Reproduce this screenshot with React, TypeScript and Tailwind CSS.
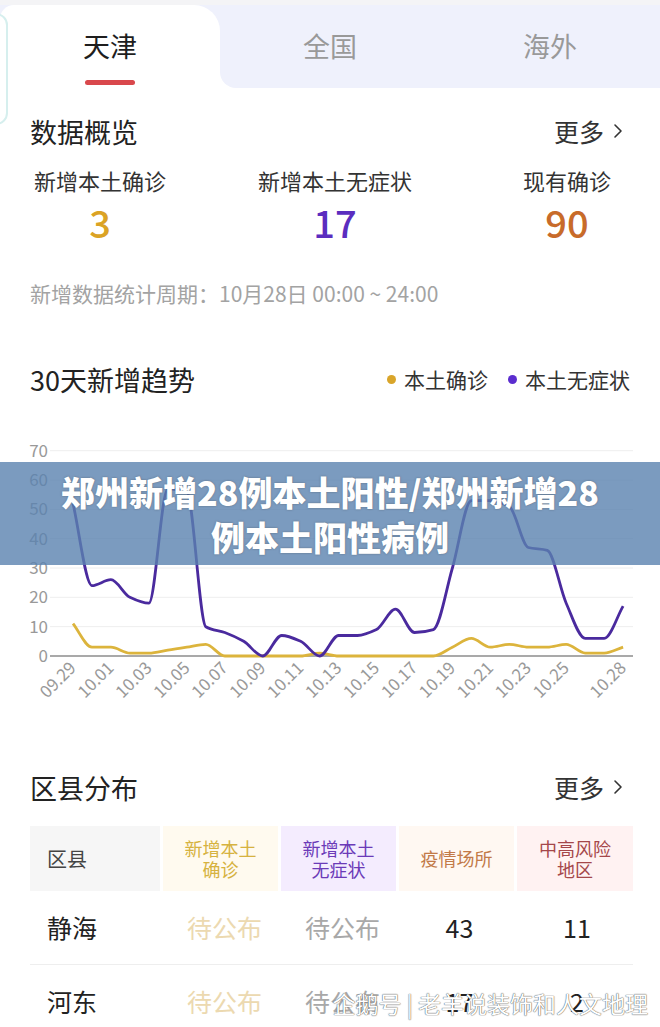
import React from 'react';
import { ChevronRight } from 'lucide-react';

const purple = [52, 24, 26, 20, 18, 57, 56, 10, 8, 5, 0, 7, 5, 0, 7, 7, 9, 16, 8, 9, 30, 53, 53, 51, 37, 36, 18, 6, 6, 17];
const gold = [11, 3, 3, 1, 1, 2, 3, 4, 0, 0, 0, 0, 0, 1, 0, 0, 0, 0, 0, 0, 3, 6, 3, 4, 3, 3, 4, 1, 1, 3];

const X0 = 73;
const STEP = 18.97;
const BASE = 226;
const UNIT = 2.933;

const px = (i: number) => X0 + STEP * i;
const py = (v: number) => BASE - v * UNIT;

// monotone cubic, so the lines don't dip under zero
function smoothPath(values: number[]) {
  const pts = values.map((v, i) => [px(i), py(v)]);
  const n = pts.length;
  const d: number[] = [];
  for (let i = 0; i < n - 1; i++) d.push((pts[i + 1][1] - pts[i][1]) / (pts[i + 1][0] - pts[i][0]));
  const t: number[] = new Array(n).fill(0);
  t[0] = d[0];
  t[n - 1] = d[n - 2];
  for (let i = 1; i < n - 1; i++) {
    const a = d[i - 1];
    const b = d[i];
    t[i] = a * b <= 0 ? 0 : (2 * a * b) / (a + b);
  }
  let path = `M${pts[0][0].toFixed(1)},${pts[0][1].toFixed(1)}`;
  for (let i = 0; i < n - 1; i++) {
    const h = pts[i + 1][0] - pts[i][0];
    const c1x = pts[i][0] + h / 3;
    const c1y = pts[i][1] + (t[i] * h) / 3;
    const c2x = pts[i + 1][0] - h / 3;
    const c2y = pts[i + 1][1] - (t[i + 1] * h) / 3;
    path += ` C${c1x.toFixed(1)},${c1y.toFixed(1)} ${c2x.toFixed(1)},${c2y.toFixed(1)} ${pts[i + 1][0].toFixed(1)},${pts[i + 1][1].toFixed(1)}`;
  }
  return path;
}

const xLabels: [number, string][] = [
  [0, '09.29'], [2, '10.01'], [4, '10.03'], [6, '10.05'], [8, '10.07'], [10, '10.09'], [12, '10.11'],
  [14, '10.13'], [16, '10.15'], [18, '10.17'], [20, '10.19'], [22, '10.21'], [24, '10.23'], [26, '10.25'], [29, '10.28'],
];

const SectionHead: React.FC<{ title: string; more?: boolean; legend?: boolean }> = ({ title, more, legend }) => (
  <div className="flex h-[48px] items-center justify-between">
    <span className="text-[27px] leading-none text-[#222]">{title}</span>
    {more && (
      <span className="flex items-center text-[25px] leading-none text-[#333]">
        更多
        <ChevronRight className="ml-[2px] h-[24px] w-[24px]" strokeWidth={1.6} />
      </span>
    )}
    {legend && (
      <span className="flex items-center text-[21px] leading-none text-[#333]">
        <span className="mr-[8px] h-[9px] w-[9px] rounded-full bg-[#d9a52a]" />
        本土确诊
        <span className="ml-[20px] mr-[8px] h-[9px] w-[9px] rounded-full bg-[#5b2dcf]" />
        本土无症状
      </span>
    )}
  </div>
);

const Chart: React.FC = () => (
  <div className="relative mt-[27px] h-[290px]">
    <svg width="660" height="290" className="block">
      {[70, 60, 50, 40, 30, 20, 10].map((v) => (
        <line key={v} x1="50" x2="633" y1={py(v)} y2={py(v)} stroke="#eeeeee" strokeWidth="1" />
      ))}
      <line x1="50" x2="633" y1={BASE} y2={BASE} stroke="#8c8c8c" strokeWidth="1.5" />
      {[70, 60, 50, 40, 30, 20, 10, 0].map((v) => (
        <text key={v} x="48" y={py(v)} dy="0.35em" textAnchor="end" fontSize="17" fill="#999">
          {v}
        </text>
      ))}
      <path d={smoothPath(gold)} fill="none" stroke="#dcb43c" strokeWidth="2.8" strokeLinejoin="round" />
      <path d={smoothPath(purple)} fill="none" stroke="#4a2a9e" strokeWidth="2.8" strokeLinejoin="round" />
      {xLabels.map(([i, l]) => (
        <text
          key={l}
          x={px(i) + 4}
          y={BASE + 13}
          textAnchor="end"
          fontSize="17"
          fill="#999"
          transform={`rotate(-45 ${px(i) + 4} ${BASE + 13})`}
        >
          {l}
        </text>
      ))}
    </svg>
    <div className="absolute left-0 right-0 top-[32px] flex h-[103px] items-center justify-center bg-[#5a82af]/80 text-center text-[34px] font-black leading-[45px] text-white [text-shadow:0_0_2px_rgba(60,60,60,0.5)]">
      <span>
        郑州新增28例本土阳性/郑州新增28
        <br />
        例本土阳性病例
      </span>
    </div>
  </div>
);

const headCells = [
  { t: ['区县'], bg: 'bg-[#f6f6f6]', c: 'text-[#444] text-[20px] justify-start pl-[17px]' },
  { t: ['新增本土', '确诊'], bg: 'bg-[#fffaef]', c: 'text-[#d6b240] text-[18px] justify-center' },
  { t: ['新增本土', '无症状'], bg: 'bg-[#f4ecfe]', c: 'text-[#6b3ab8] text-[18px] justify-center' },
  { t: ['疫情场所'], bg: 'bg-[#fff8f2]', c: 'text-[#c27a48] text-[18px] justify-center' },
  { t: ['中高风险', '地区'], bg: 'bg-[#fff2f2]', c: 'text-[#a5474a] text-[18px] justify-center' },
];

const rows = [
  ['静海', '待公布', '待公布', '43', '11'],
  ['河东', '待公布', '待公布', '17', '2'],
];

const App: React.FC = () => {
  return (
    <div className="relative h-[1027px] w-[660px] overflow-hidden bg-white font-['Noto_Sans_CJK_SC','Noto_Sans',sans-serif]">
      {/* tabs */}
      <div className="bg-[#f4f4f6] pt-[5px]">
        <div className="flex h-[83px] bg-[#eff1fc]">
          <div className="relative flex w-[220px] flex-col items-center rounded-tl-[14px] rounded-tr-[26px] bg-white">
            <span className="mt-[23px] text-[27px] leading-[36px] text-[#1e1e1e]">天津</span>
            <span className="mt-[16px] h-[5px] w-[50px] rounded-full bg-[#d9484c]" />
            <div className="absolute bottom-0 right-[-16px] h-[16px] w-[16px] bg-white">
              <div className="h-full w-full rounded-bl-[16px] bg-[#eff1fc]" />
            </div>
          </div>
          <div className="flex w-[220px] justify-center">
            <span className="mt-[23px] text-[27px] leading-[36px] text-[#999]">全国</span>
          </div>
          <div className="flex w-[220px] justify-center">
            <span className="mt-[23px] text-[27px] leading-[36px] text-[#999]">海外</span>
          </div>
        </div>
      </div>
      <div className="absolute left-[-30px] top-[13px] h-[112px] w-[38px] rounded-[12px] border-2 border-[#d6efee]" />

      <div className="px-[30px]">
        <div className="mt-[19px]">
          <SectionHead title="数据概览" more />
        </div>
        <div className="-mx-[30px] mt-[10px] flex">
          {[
            ['新增本土确诊', '3', 'text-[#dba325]', 'ml-[20px]'],
            ['新增本土无症状', '17', 'text-[#5b2dbf]', 'ml-[75px]'],
            ['现有确诊', '90', 'text-[#c86b2a]', 'ml-[72px]'],
          ].map(([l, n, c, m]) => (
            <div key={l} className={`flex w-[160px] flex-col items-center ${m}`}>
              <span className="h-[30px] text-[22px] leading-[30px] text-[#333]">{l}</span>
              <span className={`mt-[5px] h-[44px] text-[38px] font-medium leading-[44px] ${c}`}>{n}</span>
            </div>
          ))}
        </div>
        <div className="mt-[35px] h-[28px] text-[21px] leading-[28px] text-[#a3a3a3]">
          新增数据统计周期：10月28日 00:00 ~ 24:00
        </div>
        <div className="mt-[48px]">
          <SectionHead title="30天新增趋势" legend />
        </div>
      </div>

      <Chart />

      <div className="px-[27px]">
        <div className="mt-[43px] px-[3px]">
          <SectionHead title="区县分布" more />
        </div>
        <div className="mt-[15px] grid grid-cols-[130px_115px_115px_115px_116px] gap-x-[3px] pl-[3px]">
          {headCells.map((h) => (
            <div key={h.t.join('')} className={`flex h-[65px] items-center ${h.bg} ${h.c}`}>
              <span className="text-center leading-[21px]">
                {h.t.map((s, i) => (
                  <React.Fragment key={s}>
                    {i > 0 && <br />}
                    {s}
                  </React.Fragment>
                ))}
              </span>
            </div>
          ))}
        </div>
        {rows.map((r, ri) => (
          <div
            key={r[0]}
            className={`ml-[3px] grid h-[74px] grid-cols-[130px_115px_115px_115px_116px] gap-x-[3px] items-center text-[25px] ${ri === 0 ? 'border-b border-[#eeeeee]' : ''}`}
          >
            <span className="pl-[17px] text-[#222]">{r[0]}</span>
            <span className="pl-[8px] text-center text-[#ecd9b0]">{r[1]}</span>
            <span className="pl-[8px] text-center text-[#a8a8a8]">{r[2]}</span>
            <span className="pl-[6px] text-center text-[#222]">{r[3]}</span>
            <span className="pl-[4px] text-center text-[#222]">{r[4]}</span>
          </div>
        ))}
      </div>

      <div className="absolute right-[12px] top-[988px] whitespace-nowrap text-[23px] leading-[30px] text-white [text-shadow:0_0_1px_#555,0_0_1px_#555]">
        企鹅号 | 老羊说装饰和人文地理
      </div>
    </div>
  );
};

export default App;
